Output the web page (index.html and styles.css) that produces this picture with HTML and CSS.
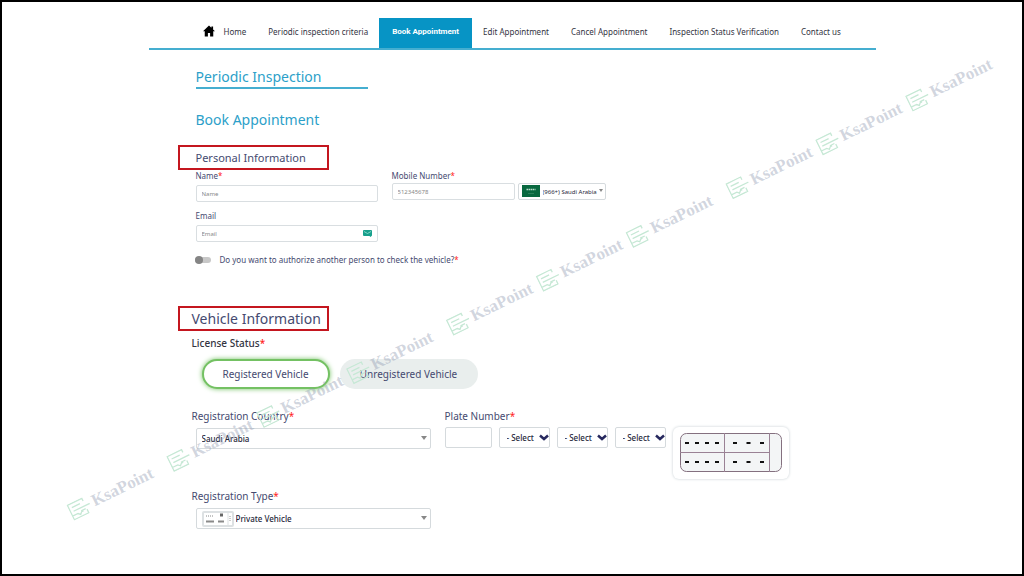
FILE: index.html
```html
<!DOCTYPE html>
<html lang="en">
<head>
  <meta charset="UTF-8" />
  <meta name="viewport" content="width=device-width, initial-scale=1.0" />
  <title>Book Appointment</title>
  <link rel="stylesheet" href="styles.css">
</head>
<body>

  <div class="page">
    <nav class="nav">
      <a href="#" class="nav-home">
        <svg width="12" height="12" viewBox="0 0 24 24"><path fill="#000" d="M12 1 0 12.500h3.500V23h6.300v-7h4.400v7h6.300V12.500H24l-3.800-3.700V3h-3.400v2.600z"/></svg>
        Home
      </a>
      <a href="#">Periodic inspection criteria</a>
      <a href="#" class="active">Book Appointment</a>
      <a href="#">Edit Appointment</a>
      <a href="#">Cancel Appointment</a>
      <a href="#">Inspection Status Verification</a>
      <a href="#">Contact us</a>
    </nav>

    <main class="content">
      <h1 class="title">Periodic Inspection</h1>
      <h2 class="subtitle">Book Appointment</h2>

      <form>
        <h3 class="box-title">Personal Information</h3>

        <div class="personal">
          <div class="personal-col">
            <label class="small-label" for="name">Name<span class="req">*</span></label>
            <input class="text-input" type="text" id="name" placeholder="Name" />
            <label class="small-label email-label" for="email">Email</label>
            <div class="field">
              <input class="text-input" type="email" id="email" placeholder="Email" />
              <svg class="mail-icon" width="9" height="7" viewBox="0 0 18 14"><path fill="#17a08c" d="M2 0h14q2 0 2 2v9l-3 3-2-2H2q-2 0-2-2V2q0-2 2-2z"/><path fill="none" stroke="#a5e6da" stroke-width="1.500" d="m2 3 7 4 7-4"/></svg>
            </div>
          </div>
          <div class="mobile-col">
            <label class="small-label" for="mobile">Mobile Number<span class="req">*</span></label>
            <div class="mobile-row">
              <input class="text-input" type="tel" id="mobile" placeholder="512345678" />
              <div class="field arrow code-field">
                <select class="code-select" aria-label="Country code">
                  <option>(966+) Saudi Arabia</option>
                </select>
                <svg class="flag" width="18" height="12" viewBox="0 0 36 24"><path fill="#08683f" d="M0 0h36v24H0z"/><path stroke="#b9dccb" stroke-width="3" stroke-dasharray="3 1" d="M9 9h18"/><path stroke="#4c9a76" d="M12 17h12"/></svg>
              </div>
            </div>
          </div>
        </div>

        <label class="switch-row">
          <input type="checkbox" class="switch" />
          <span>Do you want to authorize another person to check the vehicle?<span class="req">*</span></span>
        </label>

        <h3 class="box-title vehicle-title">Vehicle Information</h3>

        <div class="vehicle">
          <p class="status-label">License Status<span class="req">*</span></p>
          <div class="status-row">
            <button type="button" class="btn-status selected">Registered Vehicle</button>
            <button type="button" class="btn-status">Unregistered Vehicle</button>
          </div>

          <div class="vehicle-row">
            <div class="country-col">
              <label class="label" for="country">Registration Country<span class="req">*</span></label>
              <div class="field arrow indent">
                <select class="select" id="country">
                  <option>Saudi Arabia</option>
                </select>
              </div>
            </div>
            <div>
              <label class="label" for="plate">Plate Number<span class="req">*</span></label>
              <div class="plate-row">
                <input class="plate-input" type="text" id="plate" />
                <div class="field">
                  <select class="letter-select" aria-label="First letter"><option>- Select -</option></select>
                  <svg class="chevron" width="10" height="7" viewBox="0 0 20 14"><path fill="none" stroke="#26285e" stroke-width="5" d="m2 3 8 7 8-7"/></svg>
                </div>
                <div class="field">
                  <select class="letter-select" aria-label="Second letter"><option>- Select -</option></select>
                  <svg class="chevron" width="10" height="7" viewBox="0 0 20 14"><path fill="none" stroke="#26285e" stroke-width="5" d="m2 3 8 7 8-7"/></svg>
                </div>
                <div class="field">
                  <select class="letter-select" aria-label="Third letter"><option>- Select -</option></select>
                  <svg class="chevron" width="10" height="7" viewBox="0 0 20 14"><path fill="none" stroke="#26285e" stroke-width="5" d="m2 3 8 7 8-7"/></svg>
                </div>
              </div>
            </div>
            <div class="plate-card">
              <svg width="102" height="40" viewBox="0 0 102 40">
                <rect x="0.500" y="0.500" width="101" height="38" rx="6" fill="#f3f5f6" stroke="#84707f"/>
                <path d="M44.500 0v39M89.500 0v39M0 19.500h89.500" fill="none" stroke="#9a8295"/>
                <path d="M5 10h34M5 29h34" stroke="#111" stroke-width="2" stroke-dasharray="4 6"/>
                <path d="M53 10h31M53 29h31" stroke="#111" stroke-width="2" stroke-dasharray="4 9.500"/>
              </svg>
            </div>
          </div>

          <div class="country-col">
            <label class="label" for="type">Registration Type<span class="req">*</span></label>
            <div class="field arrow indent">
              <select class="select type-select" id="type">
                <option>Private Vehicle</option>
              </select>
              <svg class="type-icon" width="32" height="16" viewBox="0 0 32 16">
                <rect x="1" y="1" width="30" height="14" rx="1" fill="#fff" stroke="#dde1e3" stroke-width="2"/>
                <path d="M26 2v12" stroke="#dde1e3"/>
                <path d="M4 5h8" stroke="#888" stroke-dasharray="1 1"/>
                <path d="M4 10.500h8M16 10.500h6" stroke="#8a8a8a" stroke-width="2"/>
                <path d="M18 4h3" stroke="#666" stroke-width="3"/>
                <path d="M28 5v6" stroke="#999" stroke-dasharray="1 1"/>
              </svg>
            </div>
          </div>
        </div>
      </form>
    </main>
  </div>

  <svg width="0" height="0" class="defs">
    <symbol id="mark" viewBox="0 0 22 18">
      <path d="M13 1H1v16h16v-4M13 1h4v3M4 5h9M4 9h18M1 13h6l2 2 2-2h2M11 12h5" fill="none" stroke="#c6e8d5" stroke-width="1.300"/>
    </symbol>
  </svg>
  <div class="watermark" aria-hidden="true">
    <span><svg><use href="#mark"/></svg>KsaPoint</span>
    <span class="wide"><svg><use href="#mark"/></svg>KsaPoint</span>
    <span><svg><use href="#mark"/></svg>KsaPoint</span>
    <span><svg><use href="#mark"/></svg>KsaPoint</span>
    <span class="wide"><svg><use href="#mark"/></svg>KsaPoint</span>
    <span><svg><use href="#mark"/></svg>KsaPoint</span>
    <span><svg><use href="#mark"/></svg>KsaPoint</span>
    <span class="wide"><svg><use href="#mark"/></svg>KsaPoint</span>
    <span><svg><use href="#mark"/></svg>KsaPoint</span>
    <span><svg><use href="#mark"/></svg>KsaPoint</span>
  </div>

</body>
</html>
```
FILE: styles.css
```css
* {
  box-sizing: border-box;
}

body {
  margin: 0;
  min-height: 100vh;
  position: relative;
  overflow: hidden;
  border: 2px solid #000;
  background: #fff;
  color: #454a70;
  font-family: "Noto Sans", "Open Sans", sans-serif;
}

h1, h2, h3, p {
  margin: 0;
  font-weight: 400;
}

input, select, button {
  font-family: inherit;
  margin: 0;
}

.page {
  max-width: 727px;
  margin: 0 auto;
  padding-top: 16px;
}

/* navigation */
.nav {
  display: flex;
  height: 32px;
  padding-left: 43px;
  border-bottom: 2px solid #45aed0;
}

.nav a {
  display: flex;
  align-items: center;
  padding: 0 11px 4px;
  color: #33343f;
  font-size: 8px;
  text-decoration: none;
  white-space: nowrap;
}

.nav .nav-home {
  gap: 9px;
}

.nav .active {
  padding: 0 13px 4px;
  background: #0794c5;
  color: #fff;
  font-family: Roboto, sans-serif;
  font-weight: 700;
}

.content {
  padding-left: 29px;
}

.title,
.subtitle {
  margin-left: 18px;
  color: #2c9fc9;
  font-size: 14px;
  line-height: 20px;
}

.title {
  width: 172px;
  margin-top: 17px;
  border-bottom: 2px solid #45aed0;
}

.subtitle {
  margin-top: 21px;
}

.box-title {
  width: 151px;
  height: 25px;
  margin-top: 15px;
  padding-left: 16px;
  border: 2px solid #c4161f;
  font-size: 11px;
  line-height: 21px;
  white-space: nowrap;
}

.req {
  color: #f22;
}

/* personal information */
.personal {
  display: flex;
  gap: 14px;
  margin-left: 18px;
}

.personal-col {
  width: 182px;
}

.small-label {
  display: block;
  font-size: 8px;
  line-height: 12px;
}

.email-label {
  margin-top: 8px;
}

.text-input {
  display: block;
  width: 100%;
  height: 17px;
  padding: 0 5px;
  border: 1px solid #d9dee1;
  border-radius: 2px;
  background: #fff;
  font-size: 6px;
}

.text-input::placeholder {
  color: #888;
}

.personal-col .text-input {
  margin-top: 3px;
}

.field {
  position: relative;
}

.mail-icon {
  position: absolute;
  right: 6px;
  top: 5px;
}

.mobile-row {
  display: flex;
  gap: 3px;
  margin-top: 1px;
}

.mobile-row .text-input {
  width: 123px;
}

.code-field {
  width: 88px;
}

select {
  appearance: none;
  display: block;
  width: 100%;
  border: 1px solid #d5dadd;
  border-radius: 2px;
  background: #fff;
  color: #26273a;
  font-weight: 500;
}

.code-select {
  height: 17px;
  padding: 0 0 0 24px;
  font-size: 6px;
  font-weight: 400;
}

.flag {
  position: absolute;
  left: 4px;
  top: 2px;
}

.arrow::after {
  content: "";
  position: absolute;
  right: 4px;
  top: 8px;
  border: 3px solid transparent;
  border-top: 4px solid #888;
  border-bottom: 0;
}

.code-field::after {
  top: 6px;
  right: 3px;
  border-width: 3px 2px 0;
}

.switch-row {
  display: flex;
  align-items: center;
  gap: 9px;
  margin: 11px 0 0 17px;
  font-size: 8px;
  line-height: 13px;
}

.switch {
  appearance: none;
  position: relative;
  width: 16px;
  height: 6px;
  border-radius: 3px;
  background: #c8c8c8;
}

.switch::before {
  content: "";
  position: absolute;
  left: 0;
  top: -1px;
  width: 8px;
  height: 8px;
  border-radius: 50%;
  background: #858585;
}

/* vehicle information */
.vehicle-title {
  margin-top: 40px;
  padding-left: 12px;
  font-size: 14px;
}

.vehicle {
  margin-left: 14px;
}

.status-label {
  margin-top: 5px;
  color: #33343f;
  font-size: 10px;
  font-weight: 500;
  line-height: 14px;
}

.status-row {
  display: flex;
  gap: 10px;
  margin: 9px 0 0 10px;
}

.btn-status {
  width: 138px;
  height: 30px;
  padding: 0;
  border: 0;
  border-radius: 15px;
  background: #e9eeed;
  color: #454a70;
  font-size: 10px;
}

.btn-status.selected {
  width: 128px;
  border: 2px solid #74c163;
  background: #fff;
  box-shadow: 0 0 5px #74c163;
}

.label {
  display: block;
  font-size: 10px;
  line-height: 14px;
}

.vehicle-row {
  display: flex;
  height: 71px;
  margin: 20px 0 9px;
}

.country-col {
  width: 239px;
}

.indent {
  margin: 5px 0 0 4px;
}

.country-col + div {
  margin-left: 14px;
}

.select {
  height: 21px;
  padding: 0 5px;
  font-size: 8px;
}

.type-select {
  padding-left: 39px;
}

.type-icon {
  position: absolute;
  left: 6px;
  top: 3px;
}

.plate-row {
  display: flex;
  gap: 7px;
  margin-top: 4px;
}

.plate-input {
  width: 47px;
  height: 21px;
  border: 1px solid #d5dadd;
  border-radius: 2px;
}

.letter-select {
  width: 51px;
  height: 21px;
  padding: 0 14px 0 7px;
  font-size: 8px;
}

.chevron {
  position: absolute;
  right: 1px;
  top: 7px;
}

.plate-card {
  height: 52px;
  margin: 18px 0 0 7px;
  padding: 6px 7px;
  border-radius: 6px;
  box-shadow: 0 0 3px #c5cdd2;
}

/* diagonal watermark */
.defs {
  position: absolute;
}

.watermark {
  position: absolute;
  left: 68px;
  top: 501px;
  display: flex;
  transform: rotate(-26deg);
  transform-origin: 0 50%;
  pointer-events: none;
}

.watermark span {
  display: flex;
  flex: none;
  align-items: center;
  gap: 3px;
  width: 100px;
  color: rgba(145, 155, 178, 0.42);
  font-family: "Liberation Serif", serif;
  font-size: 17px;
  font-weight: 700;
  line-height: 20px;
}

.watermark svg {
  width: 22px;
  height: 18px;
}

.watermark .wide {
  margin-left: 11px;
}
```
